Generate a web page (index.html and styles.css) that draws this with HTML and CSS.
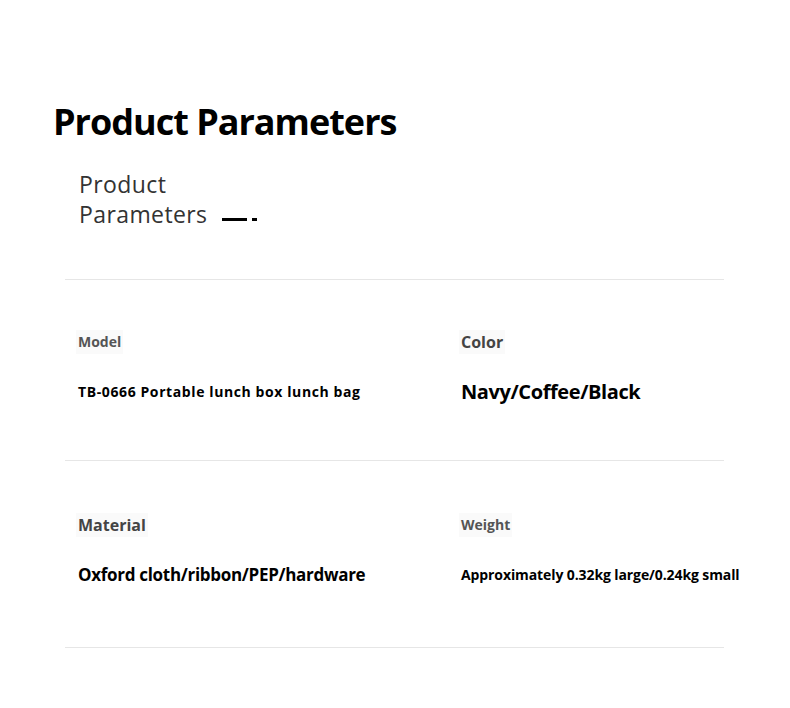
FILE: index.html
```html
<!DOCTYPE html>
<html>
<head>
<meta charset="utf-8">
<link rel="stylesheet" href="styles.css">
</head>
<body>
<div class="page">
  <h1 class="title">Product Parameters</h1>
  <div class="subtitle">
    <div>Product</div>
    <div>Parameters<span class="dash"></span><span class="dot"></span></div>
  </div>
  <div class="table">
    <div class="row row-1">
      <div class="cell">
        <div class="label label-sm">Model</div>
        <div class="value value-model">TB-0666 Portable lunch box lunch bag</div>
      </div>
      <div class="cell">
        <div class="label label-md">Color</div>
        <div class="value value-color">Navy/Coffee/Black</div>
      </div>
    </div>
    <div class="row row-2">
      <div class="cell">
        <div class="label label-md">Material</div>
        <div class="value value-material">Oxford cloth/ribbon/PEP/hardware</div>
      </div>
      <div class="cell">
        <div class="label label-sm">Weight</div>
        <div class="value value-weight">Approximately 0.32kg large/0.24kg small</div>
      </div>
    </div>
  </div>
</div>
</body>
</html>
```

FILE: styles.css
```css
html, body {
  margin: 0;
  padding: 0;
  background: #ffffff;
}

body {
  font-family: "Open Sans", "Noto Sans", sans-serif;
  color: #000;
  width: 790px;
  height: 708px;
  overflow: hidden;
}

.page {
  padding-top: 100px;
}

.title {
  margin: 0 0 0 53px;
  font-size: 36px;
  line-height: 44px;
  font-weight: 700;
  letter-spacing: -1px;
  color: #000;
}

.subtitle {
  margin: 25px 0 0 79px;
  font-size: 23px;
  line-height: 30px;
  font-weight: 400;
  letter-spacing: 0.4px;
  color: #333;
}

.dash {
  display: inline-block;
  width: 25px;
  height: 3px;
  background: #000;
  margin-left: 15px;
  vertical-align: 2px;
}

.dot {
  display: inline-block;
  width: 5px;
  height: 3px;
  background: #000;
  margin-left: 5px;
  vertical-align: 2px;
}

.table {
  margin: 50px 0 0 65px;
  width: 659px;
  border-top: 1px solid #e6e6e6;
}

.row {
  display: grid;
  grid-template-columns: 383px 1fr;
  border-bottom: 1px solid #e6e6e6;
  padding-left: 13px;
  box-sizing: border-box;
}

.row-1 {
  height: 181px;
  padding-top: 50px;
}

.row-2 {
  height: 187px;
  padding-top: 52px;
}

.cell {
  display: flex;
  flex-direction: column;
  align-items: flex-start;
}

.label {
  height: 24px;
  line-height: 24px;
  font-weight: 700;
  background: #fafafa;
  padding: 0 2px;
  margin-left: -2px;
}

.label-sm {
  font-size: 14px;
  color: #555;
}

.label-md {
  font-size: 16px;
  color: #444;
}

.value {
  margin-top: 25px;
  height: 26px;
  line-height: 26px;
  font-weight: 700;
  color: #000;
  white-space: nowrap;
}

.value-model {
  font-size: 14px;
  letter-spacing: 0.6px;
}

.value-color {
  font-size: 20px;
  letter-spacing: -0.4px;
}

.value-material {
  font-size: 17px;
  letter-spacing: -0.3px;
}

.value-weight {
  font-size: 14px;
  letter-spacing: -0.1px;
}
```
